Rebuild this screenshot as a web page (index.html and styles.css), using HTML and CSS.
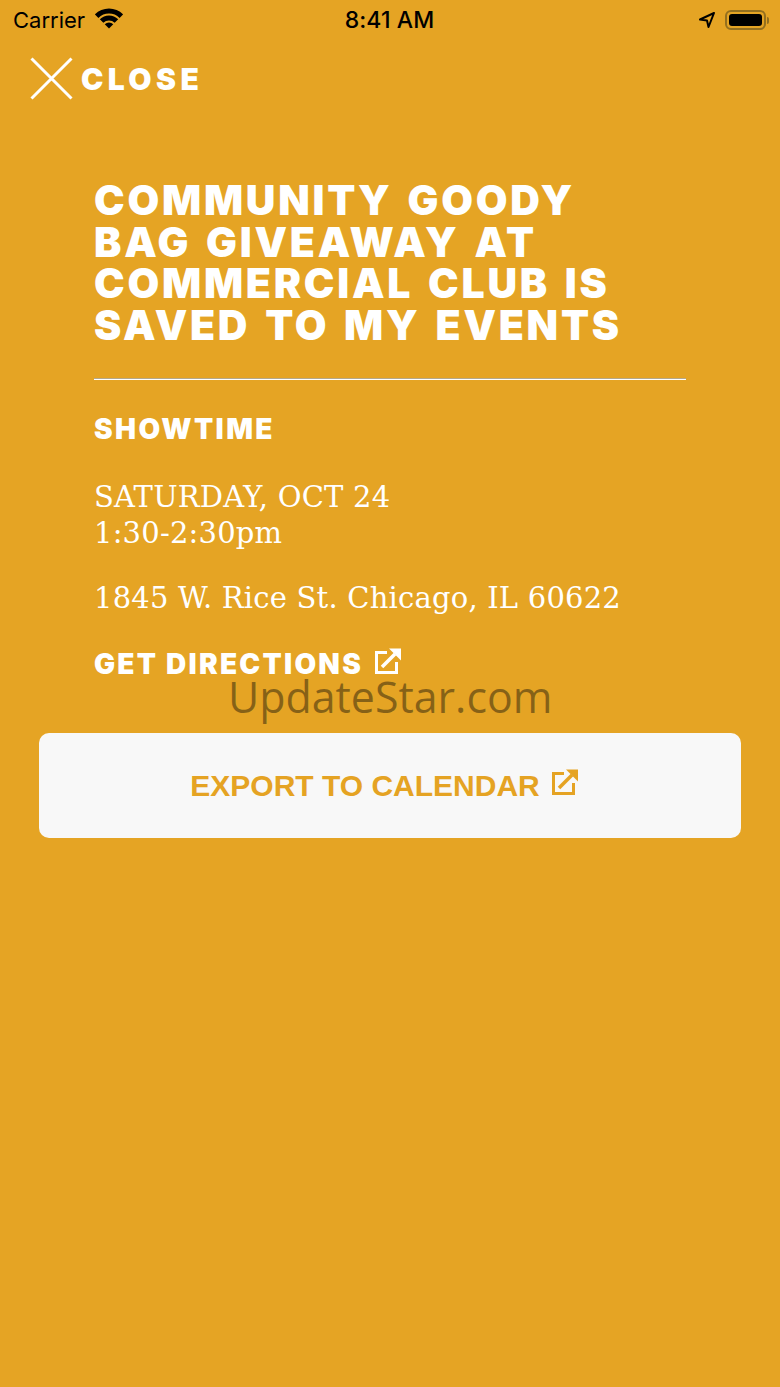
FILE: index.html
```html
<!DOCTYPE html>
<html lang="en">
<head>
    <meta charset="UTF-8">
    <meta name="viewport" content="width=device-width, initial-scale=1.0">
    <title>Saved to My Events</title>
    <link rel="stylesheet" href="styles.css">
</head>
<body>
    <div class="status-bar">
        <div class="status-left">
            <span class="carrier">Carrier</span>
            <svg class="wifi" width="28" height="21" viewBox="0 0 28 21">
                <path d="M-0.14 6.36 A20 20 0 0 1 28.14 6.36 L24.6 9.9 A15 15 0 0 0 3.4 9.9 Z" fill="#000"/>
                <path d="M4.81 11.31 A13 13 0 0 1 23.19 11.31 L19.66 14.84 A8 8 0 0 0 8.34 14.84 Z" fill="#000"/>
                <path d="M9.76 16.26 A6 6 0 0 1 18.24 16.26 L14 20.5 Z" fill="#000"/>
            </svg>
        </div>
        <span class="clock">8:41 AM</span>
        <div class="status-right">
            <svg class="location" width="18" height="18" viewBox="0 0 18 18">
                <path d="M16 2 L2 8.5 L9 9.5 L10.5 16 Z" fill="none" stroke="#000" stroke-width="2" stroke-linejoin="round"/>
            </svg>
            <div class="battery"><div class="battery-level"></div></div>
            <div class="battery-cap"></div>
        </div>
    </div>

    <div class="close-row">
        <svg class="close-icon" width="43" height="43" viewBox="0 0 43 43">
            <path d="M1.5 1.5 L41.5 41.5 M41.5 1.5 L1.5 41.5" stroke="#fff" stroke-width="3"/>
        </svg>
        <span class="close-label">CLOSE</span>
    </div>

    <div class="content">
        <h1 class="title">COMMUNITY GOODY<br>BAG GIVEAWAY AT<br>COMMERCIAL CLUB IS<br>SAVED TO MY EVENTS</h1>
        <div class="divider"></div>
        <h2 class="section-label">SHOWTIME</h2>
        <p class="when">SATURDAY, OCT 24<br>1:30-2:30pm</p>
        <p class="address">1845 W. Rice St. Chicago, IL 60622</p>
        <div class="directions">
            <span>GET DIRECTIONS</span>
            <svg class="ext-icon" width="26" height="26" viewBox="0 0 26 26">
                <path d="M12 4.5 H1.5 V24.5 H21.5 V14" fill="none" stroke="#fff" stroke-width="3"/>
                <path d="M7 19 L20 6" fill="none" stroke="#fff" stroke-width="3.5"/>
                <path d="M14 0.5 H26 V12.5 Z" fill="#fff"/>
            </svg>
        </div>
    </div>

    <div class="export-btn">
        <span>EXPORT TO CALENDAR</span>
        <svg class="ext-icon" width="26" height="26" viewBox="0 0 26 26">
            <path d="M12 4.5 H1.5 V24.5 H21.5 V14" fill="none" stroke="#e5a323" stroke-width="3"/>
            <path d="M7 19 L20 6" fill="none" stroke="#e5a323" stroke-width="3.5"/>
            <path d="M14 0.5 H26 V12.5 Z" fill="#e5a323"/>
        </svg>
    </div>

    <div class="watermark">UpdateStar.com</div>
</body>
</html>
```

FILE: styles.css
```css
* {
    margin: 0;
    padding: 0;
    box-sizing: border-box;
}

body {
    position: relative;
    width: 780px;
    height: 1387px;
    overflow: hidden;
    background: #e5a424;
    color: #fff;
    font-family: 'Inter', sans-serif;
}

.status-bar {
    display: flex;
    align-items: center;
    justify-content: space-between;
    height: 40px;
    padding: 0 11px 0 13px;
    color: #000;
    font-size: 23px;
}

.status-left {
    display: flex;
    align-items: center;
    gap: 10px;
    width: 200px;
}

.carrier {
    font-size: 22px;
}

.wifi {
    margin-top: -3px;
}

.clock {
    font-weight: 500;
    letter-spacing: 0.1px;
}

.status-right {
    display: flex;
    align-items: center;
    justify-content: flex-end;
    width: 203px;
}

.location {
    margin-right: 9px;
}

.battery {
    width: 41px;
    height: 20px;
    padding: 2px;
    border: 2px solid #94701f;
    border-radius: 6px;
}

.battery-level {
    height: 100%;
    background: #000;
    border-radius: 3px;
}

.battery-cap {
    width: 2px;
    height: 7px;
    margin-left: 1px;
    background: #94701f;
    border-radius: 0 2px 2px 0;
}

.close-row {
    display: flex;
    align-items: center;
    gap: 8px;
    height: 43px;
    margin: 17px 0 0 30px;
}

.close-label {
    font-size: 30px;
    font-weight: 900;
    letter-spacing: 4.4px;
}

.content {
    padding: 0 94px;
}

.title {
    margin-top: 80px;
    font-size: 41px;
    line-height: 41.5px;
    font-weight: 900;
    letter-spacing: 2.75px;
    word-spacing: 4px;
}

.divider {
    height: 2px;
    margin-top: 32px;
    background: #fff;
    border-top: 1px solid #b5a88a;
}

.section-label {
    margin-top: 31px;
    font-size: 28px;
    line-height: 36px;
    font-weight: 900;
    letter-spacing: 2.4px;
}

.when,
.address {
    font-family: 'DejaVu Serif', serif;
    font-size: 29px;
    line-height: 36px;
    letter-spacing: 0.2px;
}

.when {
    margin-top: 32px;
}

.address {
    margin-top: 29px;
}

.directions {
    display: flex;
    align-items: center;
    gap: 12px;
    margin-top: 31px;
    font-size: 28px;
    font-weight: 900;
    letter-spacing: 2.25px;
}

.ext-icon {
    margin-top: -7px;
}

.export-btn {
    display: flex;
    align-items: center;
    justify-content: center;
    gap: 12px;
    height: 105px;
    margin: 52px 39px 0;
    padding-right: 12px;
    background: #f8f8f8;
    border-radius: 10px;
    color: #e5a323;
    font-family: 'Liberation Sans', sans-serif;
    font-size: 30px;
    font-weight: 700;
}

.watermark {
    position: absolute;
    left: 228px;
    top: 667px;
    font-family: 'Open Sans', sans-serif;
    font-size: 42.9px;
    line-height: 60px;
    color: rgba(40, 30, 10, 0.5);
}
```
